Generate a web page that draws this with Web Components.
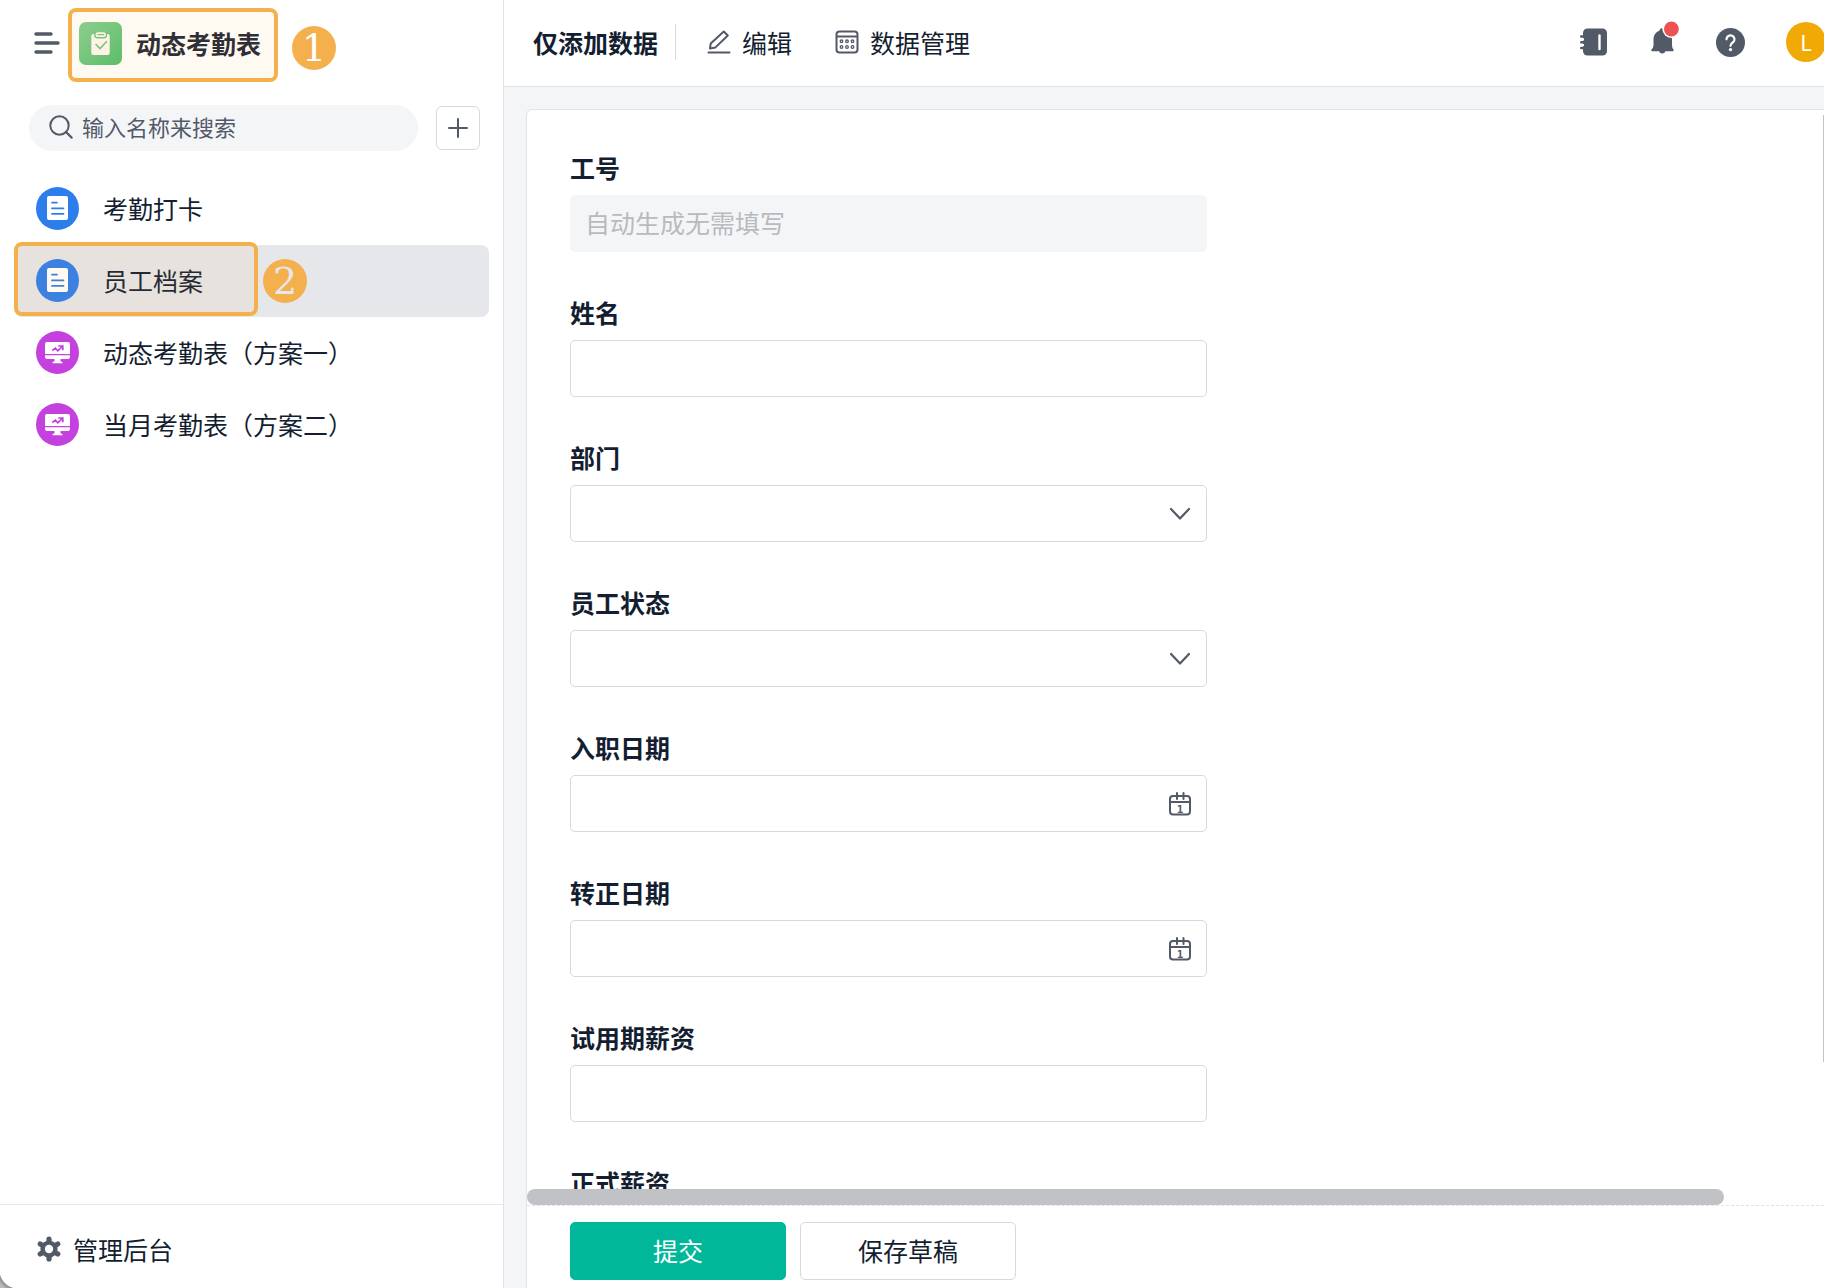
<!DOCTYPE html>
<html lang="zh-CN">
<head>
<meta charset="utf-8">
<title>动态考勤表</title>
<style>
  :root {
    --ink: #141e31;
    --icon: #525967;
    --line: #e0e2e5;
    --field-line: #d7d9dc;
    --soft: #f4f5f7;
    --mark: #f5b04e;
  }
  html, body { height: 100%; margin: 0; }
  body {
    font: 400 25px/36px "Noto Sans CJK SC", sans-serif;
    color: var(--ink);
    background: #fff;
    overflow: hidden;
  }
</style>
</head>
<body>
<attendance-app></attendance-app>

<script>
const define = (name, html, setup) => customElements.define(name, class extends HTMLElement {
  constructor() {
    super();
    const t = document.createElement('template');
    t.innerHTML = '<style>*,*::before{box-sizing:border-box}:host{box-sizing:border-box}[hidden]{display:none!important}svg{display:block;flex:none}input,select,button{font:inherit;color:inherit;margin:0}</style>' + html;
    this.attachShadow({ mode: 'open' }).append(t.content.cloneNode(true));
  }
  connectedCallback() { if (setup) setup(this, this.shadowRoot); }
});

const icons = {
  menu: [26, 26, '<g stroke="currentColor" stroke-width="3.4" stroke-linecap="round"><path d="M2 4h15M2 13h22M2 22h15"/></g>'],
  search: [24, 24, '<g fill="none" stroke="currentColor" stroke-width="2"><circle cx="10.5" cy="10.5" r="9.2"/><path d="M17 17l5.6 5.6" stroke-linecap="round" stroke-width="2.2"/></g>'],
  plus: [20, 20, '<path d="M10 1v18M1 10h18" stroke="currentColor" stroke-width="2" stroke-linecap="round"/>'],
  doc: [43, 43, '<circle cx="21.5" cy="21.5" r="21.5" fill="#2e7ded"/><rect x="11" y="9" width="21" height="24" rx="2" fill="#fff"/><path d="M16 15.6h5M16 21.4h11.4M16 26.8h11.4" stroke="#2e7ded" stroke-width="1.8" stroke-linecap="round"/>'],
  board: [43, 43, '<circle cx="21.5" cy="21.5" r="21.5" fill="#c440df"/><path d="M11 11h21a2 2 0 0 1 2 2v10H9V13a2 2 0 0 1 2-2zM9 24.3h25V26a2 2 0 0 1-2 2H11a2 2 0 0 1-2-2zM18.500 28h6v2q.3 1 2 1v1.200h-10V31q1.700 0 2-1z" fill="#fff"/><path d="M16.200 19.600l3-2.400 2.600 2.600 4.600-4.400M22.400 15h4.400v4.200" fill="none" stroke="#c440df" stroke-width="1.700"/>'],
  app: [43, 43, '<defs><linearGradient id="g" x1="0" y1="0" x2="1" y2="1"><stop offset="0" stop-color="#86d094"/><stop offset="1" stop-color="#4fbf6c"/></linearGradient></defs><rect width="43" height="43" rx="7" fill="url(#g)"/><rect x="12.300" y="12" width="18.400" height="21" rx="2" fill="#fff9f1"/><rect x="17.400" y="11" width="8.600" height="3.400" rx="1.300" fill="#6bc781" stroke="#6bc781" stroke-width="4.400"/><path d="M14 8h15v2H14z" fill="#76cb89"/><rect x="17.400" y="11.200" width="8.600" height="3" rx="1.300" fill="#6bc781" stroke="#fff9f1" stroke-width="1.800"/><path d="M17 22.500l4 4 6.400-6.800" fill="none" stroke="#6bc781" stroke-width="1.600" stroke-linecap="round"/>'],
  gear: [24, 26, '<g stroke="currentColor" stroke-width="5.200" stroke-linecap="round"><path d="M12 3v20M3.200 8l17.600 10M20.800 8L3.200 18"/></g><circle cx="12" cy="13" r="8.600" fill="currentColor"/><circle cx="12" cy="13" r="4.200" fill="#fff"/>'],
  pencil: [24, 24, '<g fill="none" stroke="currentColor" stroke-width="2" stroke-linejoin="round"><path d="M1.500 22.500h21" stroke-linecap="round"/><path d="M3 18.500l.7-5L16.800 1.500l4 4L8.500 17.400z"/></g>'],
  sheet: [24, 24, '<g fill="none" stroke="currentColor"><rect x="1.500" y="1.500" width="21" height="21" rx="3" stroke-width="2"/><path d="M1.500 6.500h21" stroke-width="2"/><g stroke-width="1.300"><circle cx="6.500" cy="11.300" r="1.300"/><circle cx="12" cy="11.300" r="1.300"/><circle cx="17.500" cy="11.300" r="1.300"/><circle cx="6.500" cy="17" r="1.300"/><circle cx="12" cy="17" r="1.300"/><circle cx="17.500" cy="17" r="1.300"/></g></g>'],
  book: [27, 28, '<rect x="3" y=".5" width="24" height="27" rx="4.500" fill="currentColor"/><path d="M1 11.400h3M1 17.100h3" stroke="#fff" stroke-width="2.400"/><path d="M1.200 8.500h4M1.200 14.200h4M1.200 20h4" stroke="currentColor" stroke-width="2.400" stroke-linecap="round"/><path d="M19.500 7.500v13.600" stroke="#fff" stroke-width="2.400" stroke-linecap="round"/>'],
  bell: [28, 36, '<path d="M11 7.500q3.300 1.200 6.500 3.200Q21 13 21 18v6q0 3 1.500 4.500.6 1.500-.6 1.800H14.500a3.500 3.500 0 0 1-6.500 0H1q-1.200-.3-.6-1.800Q2.500 27 2.500 24v-6q0-6 6-8.500Q9 7 11 7z" fill="currentColor"/><circle cx="20.400" cy="8" r="9" fill="#fff"/><circle cx="20.400" cy="8" r="7.400" fill="#ee5151"/>'],
  help: [29, 29, '<circle cx="14.500" cy="14.500" r="14.500" fill="currentColor"/><path d="M10.500 11.300a4 3.900 0 1 1 6.500 3q-2.500 1.600-2.500 3.500" fill="none" stroke="#fff" stroke-width="2.200" stroke-linecap="round"/><circle cx="14.500" cy="21.600" r="1.700" fill="#fff"/>'],
  chevron: [22, 14, '<path d="M2 2l9 9.500L20 2" fill="none" stroke="currentColor" stroke-width="2.200" stroke-linecap="round" stroke-linejoin="round"/>'],
  date: [22, 24, '<g fill="none" stroke="currentColor" stroke-width="2"><rect x="1" y="4" width="20" height="18.500" rx="3"/><path d="M1 10h20"/><path d="M8 1v6M14.500 1v6" stroke-linecap="round"/></g><text x="11" y="20.500" text-anchor="middle" font-family="DejaVu Sans Mono, monospace" font-size="11" font-weight="700" fill="currentColor">1</text>']
};

/* An inline icon, chosen by its name attribute. */
define('app-icon', '<style>:host{display:inline-flex;flex:none;color:var(--icon)}</style><span style="display:flex"></span>', (el, root) => {
  const [w, h, body] = icons[el.getAttribute('name')];
  root.querySelector('span').innerHTML = `<svg width="${w}" height="${h}" viewBox="0 0 ${w} ${h}" aria-hidden="true">${body}</svg>`;
});

/* Guide step: a translucent frame with a numbered disc to its right. */
define('guide-mark', `
<style>
  :host { position: absolute; border: 4px solid var(--mark); border-radius: 8px; background: rgba(245,176,78,.08); pointer-events: none; }
  span { position: absolute; left: calc(100% + var(--gap)); top: var(--drop); width: 44px; height: 44px; border-radius: 50%;
    background: var(--mark); color: var(--digit, #fff); font: 38px/44px "DejaVu Serif", serif; text-align: center; }
</style><span><slot></slot></span>`);

define('nav-item', `
<style>
  :host { display: block; position: relative; }
  a { display: flex; align-items: center; gap: 24px; height: 72px; padding: 0 0 2px 22px; border-radius: 8px; color: var(--ink); text-decoration: none; white-space: nowrap; }
  :host([active]) a { background: #e6e7eb; }
</style>
<a href="#"><i></i><slot></slot></a><slot name="mark"></slot>`, (el, root) => {
  const icon = document.createElement('app-icon');
  icon.setAttribute('name', el.getAttribute('icon'));
  root.querySelector('i').replaceWith(icon);
  if (el.hasAttribute('active')) root.querySelector('a').setAttribute('aria-current', 'page');
});

define('app-sidebar', `
<style>
  :host { display: flex; flex-direction: column; border-right: 1px solid var(--line); background: #fff; min-height: 0; }
  header { position: relative; display: flex; align-items: center; height: 86px; padding-left: 34px; }
  button { display: grid; place-items: center; padding: 0; border: 0; background: none; }
  h1 { margin: 0 0 0 14px; font-size: 25px; line-height: 36px; font-weight: 700; color: #1f2533; }
  .brand { margin-left: 19px; }
  .find { display: flex; align-items: center; gap: 18px; padding: 19px 23px 0 29px; }
  label { flex: 1; display: flex; align-items: center; gap: 9px; height: 46px; padding: 0 20px 2px; border-radius: 24px; background: var(--soft); }
  input { flex: 1; min-width: 0; border: 0; padding: 0 0 2px; background: none; outline: 0; font-size: 22px; line-height: 32px; }
  input::placeholder { color: var(--icon); opacity: 1; }
  .find button { width: 44px; height: 44px; border: 1px solid var(--field-line); border-radius: 6px; }
  nav { flex: 1; padding: 22px 14px 0; }
  footer { height: 84px; padding-left: 37px; border-top: 1px solid #e6e7ea; display: flex; align-items: center; }
  footer a { display: flex; align-items: center; gap: 12px; color: var(--ink); text-decoration: none; padding-top: 4px; }
  .m1 { left: 68px; top: 8px; width: 210px; height: 74px; --gap: 18px; --drop: 14px; }
  .m2 { left: 0; top: -3px; width: 244px; height: 74px; --gap: 9px; --drop: 13px; --digit: #e6e7eb; }
</style>
<header>
  <button type="button" aria-label="菜单"><app-icon name="menu"></app-icon></button>
  <app-icon class="brand" name="app"></app-icon>
  <h1>动态考勤表</h1>
  <guide-mark class="m1">1</guide-mark>
</header>
<div class="find">
  <label><app-icon name="search"></app-icon><input type="text" placeholder="输入名称来搜索" aria-label="输入名称来搜索"></label>
  <button type="button" aria-label="新建"><app-icon name="plus"></app-icon></button>
</div>
<nav>
  <nav-item icon="doc">考勤打卡</nav-item>
  <nav-item icon="doc" active>员工档案<guide-mark slot="mark" class="m2">2</guide-mark></nav-item>
  <nav-item icon="board">动态考勤表（方案一）</nav-item>
  <nav-item icon="board">当月考勤表（方案二）</nav-item>
</nav>
<footer><a href="#"><app-icon name="gear"></app-icon>管理后台</a></footer>`);

define('app-topbar', `
<style>
  :host { display: flex; align-items: center; height: 87px; padding: 0 0 2px 29px; border-bottom: 1px solid var(--line); background: #fff; overflow: hidden; }
  h2 { margin: 0; padding-right: 17px; border-right: 1px solid var(--field-line); font-size: 25px; line-height: 36px; font-weight: 700; }
  button { display: flex; align-items: center; gap: 11px; padding: 0; border: 0; background: none; line-height: 36px; }
  .edit { margin-left: 31px; }
  .data { margin-left: 43px; }
  .tools { display: flex; align-items: center; margin: 0 -2px 0 auto; }
  .tools .bell { margin: -6px 0 0 44px; }
  .tools .help { margin-left: 37px; }
  .tools .user { justify-content: center; width: 40px; height: 40px; margin-left: 41px; border-radius: 50%; background: #f0a905; color: #fff; font: 22px/40px "Noto Sans", sans-serif; }
</style>
<h2>仅添加数据</h2>
<button type="button" class="edit"><app-icon name="pencil"></app-icon>编辑</button>
<button type="button" class="data"><app-icon name="sheet"></app-icon>数据管理</button>
<div class="tools">
  <button type="button" aria-label="通讯录"><app-icon name="book"></app-icon></button>
  <button type="button" class="bell" aria-label="通知"><app-icon name="bell"></app-icon></button>
  <button type="button" class="help" aria-label="帮助"><app-icon name="help"></app-icon></button>
  <button type="button" class="user">L</button>
</div>`);

/* One labelled field; type is text, auto, select or date. */
define('form-field', `
<style>
  :host { display: grid; gap: 12px; }
  label { font-weight: 700; line-height: 32px; justify-self: start; }
  .box { display: grid; align-items: center; }
  .box > * { grid-area: 1 / 1; }
  input, select { width: 100%; height: 57px; padding: 0 14px 3px; border: 1px solid var(--field-line); border-radius: 5px; background: #fff; appearance: none; outline: 0; }
  input:disabled { border-color: var(--soft); background: var(--soft); }
  input::placeholder { color: #b8babf; opacity: 1; }
  app-icon { justify-self: end; margin-right: 16px; pointer-events: none; }
</style>
<label for="f"><slot></slot></label><div class="box"></div>`, (el, root) => {
  const type = el.getAttribute('type');
  root.querySelector('.box').innerHTML = {
    auto: '<input id="f" type="text" placeholder="自动生成无需填写" disabled>',
    text: '<input id="f" type="text">',
    select: '<select id="f"></select><app-icon name="chevron"></app-icon>',
    date: '<input id="f" type="text"><app-icon name="date"></app-icon>'
  }[type];
});

define('record-form', `
<style>
  :host { display: flex; flex-direction: column; min-height: 0; border: solid var(--line); border-width: 1px 0 0 1px; border-radius: 6px 0 0 0; background: #fff; }
  .view { position: relative; flex: 1; min-height: 0; overflow: hidden; }
  form { display: grid; gap: 44px; width: 50%; min-width: 680px; max-width: 720px; padding: 41px 0 0 43px; }
  .bar { position: absolute; background: #c1c2c6; }
  .x { left: 0; right: 100px; bottom: 0; height: 16px; border-radius: 8px; }
  .y { left: calc(100% - 1px); top: 5px; bottom: 143px; width: 1px; }
  footer { display: flex; gap: 14px; height: 83px; padding: 16px 43px 0; border-top: 1px dashed var(--line); }
  button { width: 216px; height: 58px; border: 1px solid var(--field-line); border-radius: 5px; background: #fff; padding: 0 0 2px; }
  .ok { border-color: #00b899; background: #00b899; color: #fff; }
</style>
<div class="view">
  <form>
    <form-field type="auto">工号</form-field>
    <form-field type="text">姓名</form-field>
    <form-field type="select">部门</form-field>
    <form-field type="select">员工状态</form-field>
    <form-field type="date">入职日期</form-field>
    <form-field type="date">转正日期</form-field>
    <form-field type="text">试用期薪资</form-field>
    <form-field type="text">正式薪资</form-field>
  </form>
  <div class="bar x"></div><div class="bar y"></div>
</div>
<footer><button type="button" class="ok">提交</button><button type="button">保存草稿</button></footer>`);

define('attendance-app', `
<style>
  :host { position: relative; display: grid; grid-template-columns: 504px minmax(0, 1fr); height: 100vh; overflow: hidden; }
  main { display: flex; flex-direction: column; min-height: 0; background: var(--soft); }
  record-form { flex: 1; margin: 22px 0 0 22px; }
  .corner { position: absolute; left: 0; bottom: 0; width: 18px; height: 18px; background: radial-gradient(circle at 100% 0, transparent 18px, #8f8f8f 19px, #bdbdbd 23px); }
</style>
<app-sidebar></app-sidebar>
<main><app-topbar></app-topbar><record-form></record-form></main>
<div class="corner"></div>`);
</script>
</body>
</html>
